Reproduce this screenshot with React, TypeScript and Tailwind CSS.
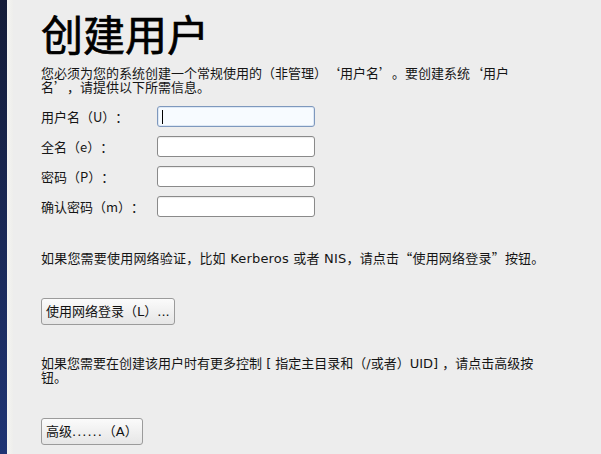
import React from "react";

function Field({ label, focused }: { label: string; focused?: boolean }) {
  return (
    <div className="flex items-center h-[21px]">
      <span className="w-[116px] shrink-0">{label}</span>
      <div
        className={
          focused
            ? "relative w-[158px] h-[21px] rounded-[3px] border border-[#7e98bd] bg-[#f7fbff] shadow-[inset_0_0_0_1px_#dde8f5]"
            : "relative w-[158px] h-[21px] rounded-[3px] border border-[#8a8a8a] bg-white shadow-[inset_0_1px_1px_rgba(0,0,0,0.08)]"
        }
      >
        {focused && <span className="absolute left-[4px] top-[3px] w-px h-[14px] bg-black" />}
      </div>
    </div>
  );
}

function Btn({ children }: { children: React.ReactNode }) {
  return (
    <button className="h-[27px] px-[4px] rounded-[3px] border border-[#9b9b9b] bg-gradient-to-b from-[#fbfbfb] to-[#e6e6e6] text-[13px] text-[#111] leading-none [text-spacing-trim:space-all]">
      {children}
    </button>
  );
}

export default function App() {
  return (
    <div className="flex w-[601px] h-[454px] overflow-hidden text-[#151515] font-['DejaVu_Sans','Noto_Sans_CJK_SC',sans-serif] [text-spacing-trim:space-all]">
      <div className="w-[7px] shrink-0 bg-gradient-to-b from-[#141c38] to-[#1f3474]" />
      <div className="w-[6px] shrink-0 bg-gradient-to-r from-[#f4f4f2] to-[#eeeeec]" />
      <div className="flex-1 bg-[#ededed] pl-[28px] pt-[9px]">
        <h1 className="text-[42px] leading-[48px] font-normal text-black font-['Noto_Sans_CJK_SC',sans-serif] [-webkit-text-stroke:0.7px_black]">
          创建用户
        </h1>
        <p className="mt-[9px] w-[530px] text-[13px] leading-[14px] font-['Noto_Sans_CJK_SC',sans-serif]">
          您必须为您的系统创建一个常规使用的（非管理）‘用户名’。要创建系统‘用户
          <br />
          名’，请提供以下所需信息。
        </p>
        <div className="mt-[12px] flex flex-col gap-[9px] text-[13px] font-['Noto_Sans_CJK_SC',sans-serif]">
          <Field label="用户名（U）：" focused />
          <Field label="全名（e）：" />
          <Field label="密码（P）：" />
          <Field label="确认密码（m）：" />
        </div>
        <p className="mt-[34px] text-[13px] leading-[14px] tracking-[0.2px]">
          如果您需要使用网络验证，比如 Kerberos 或者 NIS，请点击
          <span className="font-['Noto_Sans_CJK_SC',sans-serif]">“使用网络登录”</span>按钮。
        </p>
        <div className="mt-[32px]">
          <Btn>使用网络登录（L）...</Btn>
        </div>
        <p className="mt-[32px] w-[540px] text-[13px] leading-[14px]">
          如果您需要在创建该用户时有更多控制 [ 指定主目录和（/或者）UID] ，请点击高级按
          <br />
          钮。
        </p>
        <div className="mt-[33px]">
          <Btn>
            高级<span className="tracking-[1px]">......</span>（A）
          </Btn>
        </div>
      </div>
    </div>
  );
}
